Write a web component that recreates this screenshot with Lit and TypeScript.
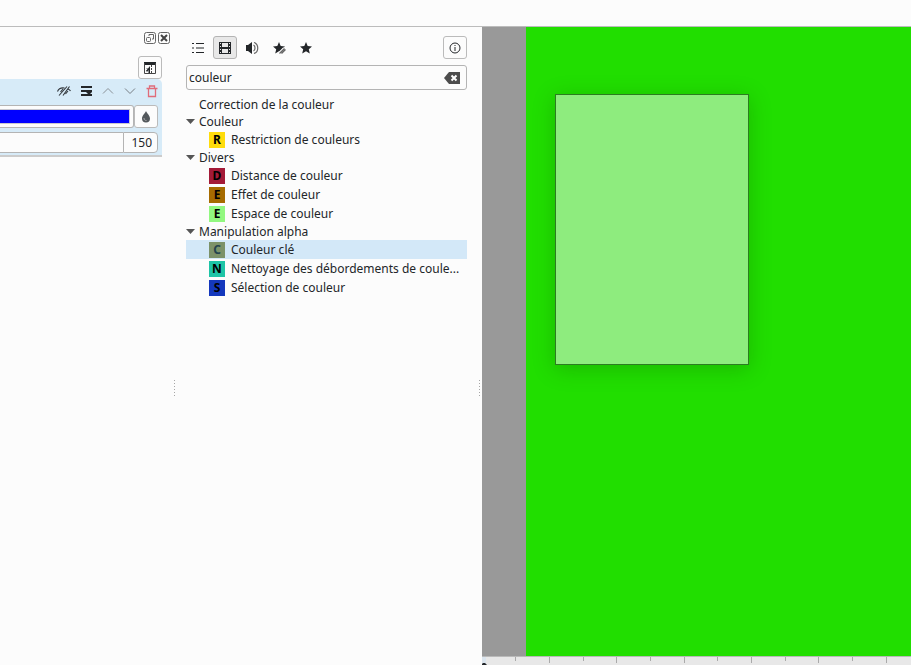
import { LitElement, html, css, svg } from "lit";
import { customElement, state } from "lit/decorators.js";
import { classMap } from "lit/directives/class-map.js";

interface Effect {
  letter: string;
  tone: string;
  label: string;
}
interface Group {
  name: string;
  effects: Effect[];
}

const GROUPS: Group[] = [
  { name: "Couleur", effects: [{ letter: "R", tone: "yellow", label: "Restriction de couleurs" }] },
  {
    name: "Divers",
    effects: [
      { letter: "D", tone: "crimson", label: "Distance de couleur" },
      { letter: "E", tone: "brown", label: "Effet de couleur" },
      { letter: "E", tone: "lime", label: "Espace de couleur" },
    ],
  },
  {
    name: "Manipulation alpha",
    effects: [
      { letter: "C", tone: "olive", label: "Couleur clé" },
      { letter: "N", tone: "teal", label: "Nettoyage des débordements de coule..." },
      { letter: "S", tone: "blue", label: "Sélection de couleur" },
    ],
  },
];

const TICKS = Array.from({ length: 60 }, (_, i) => ({ x: Math.round(33.15 + 33.7 * i), long: i % 2 === 1 }));

const icon = (body: unknown) =>
  html`<svg class="icon" width="16" height="16" viewBox="0 0 16 16" aria-hidden="true">${body}</svg>`;

const STAR = "M8 2l1.700 4 4.300.4-3.200 2.800 1 4.300L8 11.200 4.200 13.500l1-4.300L2 6.400 6.300 6z";

const ICONS = {
  float: svg`<g fill="none" stroke="#666"><rect x="2.500" y="2.500" width="11" height="11" rx="2"/><rect x="4.500" y="7.500" width="4" height="4" rx="1"/><path d="M7 6V4.500h4.500V9H10"/></g>`,
  close: svg`<rect x="2.500" y="2.500" width="11" height="11" rx="2" fill="none" stroke="#666"/><path d="M5 5l6 6M11 5l-6 6" stroke="#444" stroke-width="2"/>`,
  compare: svg`<path d="M2 2h12v3H2z" fill="#232629"/><path d="M2.500 3v10.500h11V3M9.500 5v2m0 1v2m0 1v2" fill="none" stroke="#444"/><path d="M8 6v7H6.500V10L5 12 4 10.500l1.500-1L4 8.500h2z" fill="#232629"/>`,
  hidden: svg`<g fill="none" stroke="#31363b" stroke-width="1.100"><path d="M1.500 8.500c1-2.500 3.500-4 7-3.500M12 6c1.500.5 2 1 2.500 2M3 12.500L11 3.500M7 12.500l6.500-9M4.500 9l2.500-3M9.500 11l2.500-3"/></g>`,
  menu: svg`<path d="M3 3h11v2H3zM3 7h11v2H3zM3 11h11v2H3z" fill="#232629"/><path d="M8 9h6l-3 3z" fill="#232629"/>`,
  up: svg`<path d="M3 10.500l5-5 5 5" fill="none" stroke="#8b9298"/>`,
  down: svg`<path d="M3 5.500l5 5 5-5" fill="none" stroke="#777e84"/>`,
  trash: svg`<g fill="none" stroke="#e06c7a" stroke-width="1.300"><path d="M2.500 5.500h11M5.500 5V3h5v2M4.500 6v7.500h7V6"/></g>`,
  drop: svg`<path d="M8 2c1 2.500 4 4.500 4 7.500a4 4 0 0 1-8 0C4 6.500 7 4.500 8 2z" fill="#53585c"/><path d="M6 9c0 2 1 2.500 2.500 2.500" fill="none" stroke="#aaa"/>`,
  list: svg`<path d="M2 3.500h2M2 8h2M2 12.500h2M6 3.500h8M6 8h8M6 12.500h8" stroke="#232629" stroke-width="1.200"/>`,
  film: svg`<path fill="#232629" fill-rule="evenodd" d="M2 2h12v12H2zM5 3v4h6V3zM5 9v4h6V9zM3 3v1h1V3zM3 6v1h1V6zM3 9v1h1V9zM3 12v1h1v-1zM12 3v1h1V3zM12 6v1h1V6zM12 9v1h1V9zM12 12v1h1v-1z"/>`,
  sound: svg`<path d="M2 5h2l4-3v12l-4-3H2z" fill="#232629"/><path d="M9.500 5c2 1 2 5 0 6M10 2.500c5 1.500 5 9.500 0 11" fill="none" stroke="#666" stroke-width="1.200"/>`,
  star: svg`<path d=${STAR} fill="#232629"/>`,
  starEdit: svg`<path d=${STAR} fill="#232629"/><path d="M7 14l6-6M10 14l4-4" stroke="#fcfcfc" stroke-width="2"/><path d="M8.500 13.500l5-5M10.500 13.500l4-4" stroke="#666" stroke-width="1.300"/>`,
  info: svg`<circle cx="8" cy="8" r="5" fill="none" stroke="#232629"/><path d="M7.500 5h1v1h-1zM7.500 7h1v4h-1z" fill="#232629"/>`,
  clear: svg`<path d="M0 8l5-6h11v12H5z" fill="#4d4d4d"/><path d="M7.500 5.500l5 5M12.500 5.500l-5 5" stroke="#fff" stroke-width="2"/>`,
};

@customElement("app-root")
export class AppRoot extends LitElement {
  @state() private selected = "Couleur clé";
  @state() private closed: string[] = [];

  static styles = css`
    :host {
      display: flex;
      flex-direction: column;
      height: 100vh;
      overflow: hidden;
      background: #fcfcfc;
      color: #232629;
      font: 12px/17px "Noto Sans", sans-serif;
    }
    * {
      box-sizing: border-box;
    }
    button,
    input {
      font: inherit;
      color: inherit;
      margin: 0;
      padding: 0;
    }
    button {
      border: 0;
      background: none;
    }
    .icon {
      display: block;
      flex: none;
    }
    header {
      flex: none;
      height: 27px;
      border-bottom: 1px solid #bcbcbc;
    }
    main {
      flex: 1;
      min-height: 0;
      display: flex;
    }
    .stack {
      flex: none;
      width: 171px;
      padding-top: 3px;
    }
    .dock {
      display: flex;
      justify-content: flex-end;
    }
    .dock button {
      width: 14px;
      display: flex;
      justify-content: center;
    }
    .tools {
      display: flex;
      justify-content: flex-end;
      margin: 10px 9px 0 0;
    }
    .tool {
      width: 24px;
      height: 23px;
      display: flex;
      align-items: center;
      justify-content: center;
      border: 1px solid transparent;
      border-radius: 3px;
    }
    .framed {
      border-color: #bbb;
    }
    .tool.on {
      background: #e8e8e8;
      border-color: #b4b4b4;
    }
    .effect {
      background: #d7ebf8;
      border-bottom: 2px solid #ccc;
      border-top-right-radius: 5px;
      margin-right: 9px;
      padding-bottom: 2px;
      display: flex;
      flex-direction: column;
      gap: 4px;
    }
    .actions {
      display: flex;
      align-items: center;
      justify-content: flex-end;
      gap: 6px;
      height: 22px;
      padding: 2px 2px 0 0;
    }
    .line {
      display: flex;
      padding-right: 4px;
    }
    .swatch {
      flex: 1;
      height: 23px;
      padding: 3px 3px 3px 0;
      border: 1px solid #b4b4b4;
      border-left: 0;
      border-radius: 0 3px 3px 0;
      background: #fcfcfc;
    }
    .fill {
      display: block;
      height: 15px;
      border: 1px solid #c8c8d0;
      border-left: 0;
      background: #00f;
    }
    .picker {
      background: #fcfcfc;
    }
    .slider {
      flex: 1;
      min-width: 0;
      height: 21px;
      border: 1px solid #b4b4b4;
      border-width: 1px 0;
      background: #fcfcfc;
    }
    .amount {
      width: 35px;
      height: 21px;
      padding-right: 5px;
      text-align: right;
      border: 1px solid #b4b4b4;
      border-radius: 0 4px 4px 0;
      background: #fcfcfc;
    }
    .grip {
      flex: none;
      width: 15px;
      display: flex;
      align-items: center;
      padding: 83px 0 0 3px;
    }
    .dots {
      width: 1px;
      height: 16px;
      background: repeating-linear-gradient(#a6a6a6 0 1px, transparent 1px 3px);
    }
    .grip.end {
      justify-content: flex-end;
      padding-right: 2px;
    }
    .browser {
      flex: none;
      width: 281px;
      padding-top: 9px;
    }
    .bar {
      display: flex;
      gap: 3px;
    }
    .info {
      margin-left: auto;
      background: #fcfcfc;
    }
    .search {
      display: flex;
      align-items: center;
      height: 25px;
      margin: 6px 0;
      padding: 0 6px 0 2px;
      border: 1px solid #b4b4b4;
      border-radius: 3px;
    }
    .search input {
      flex: 1;
      min-width: 0;
      border: 0;
      outline: 0;
      background: none;
    }
    .tree,
    .tree ul {
      list-style: none;
      margin: 0;
      padding: 0;
    }
    .row {
      width: 100%;
      height: 17px;
      display: flex;
      align-items: center;
      text-align: left;
      white-space: nowrap;
    }
    .arrow {
      width: 13px;
      flex: none;
    }
    .arrow svg {
      display: block;
    }
    .row.leaf {
      height: 19px;
      padding-left: 23px;
      gap: 6px;
    }
    .row.chosen {
      background: #d3e8f8;
    }
    .badge {
      flex: none;
      width: 16px;
      height: 16px;
      line-height: 16px;
      text-align: center;
      font-weight: 700;
      color: #000;
    }
    .yellow { background: #ffdc0c; }
    .crimson { background: #a31a37; }
    .brown { background: #a66b00; }
    .lime { background: #92f880; }
    .olive { background: #7c9269; color: #24444f; }
    .teal { background: #1dc4a6; }
    .blue { background: #1438bd; }
    .monitor {
      flex: 1;
      min-width: 0;
      display: flex;
      flex-direction: column;
    }
    .view {
      flex: 1;
      min-height: 0;
      padding-left: 44px;
      background: #999;
      display: flex;
    }
    .frame {
      flex: 1;
      padding: 67px 29px;
      background: #21de00;
    }
    .preview {
      width: 194px;
      height: 271px;
      background: #8eec7e;
      border: 1px solid #2c7d20;
      box-shadow: 0 4px 20px rgba(10, 70, 0, 0.25);
    }
    .ruler {
      flex: none;
      height: 9px;
      border-top: 1px solid #b9b9b9;
      background: #e8e8e8;
      overflow: hidden;
    }
    .ruler svg {
      display: block;
    }
  `;

  private toggle(name: string) {
    this.closed = this.closed.includes(name) ? this.closed.filter((n) => n !== name) : [...this.closed, name];
  }

  private tool(label: string, body: unknown, extra = "") {
    return html`<button class="tool ${extra}" aria-label=${label}>${icon(body)}</button>`;
  }

  private renderGroup(group: Group) {
    const open = !this.closed.includes(group.name);
    return html`<li>
      <button class="row" aria-expanded=${open ? "true" : "false"} @click=${() => this.toggle(group.name)}>
        <span class="arrow"><svg width="10" height="6" viewBox="0 0 10 6"><path d="M0 0h9L4.500 5z" fill="#555" /></svg></span>
        ${group.name}
      </button>
      ${open
        ? html`<ul>
            ${group.effects.map(
              (e) => html`<li>
                <button
                  class=${classMap({ row: true, leaf: true, chosen: this.selected === e.label })}
                  @click=${() => (this.selected = e.label)}
                >
                  <span class="badge ${e.tone}" aria-hidden="true">${e.letter}</span>${e.label}
                </button>
              </li>`
            )}
          </ul>`
        : ""}
    </li>`;
  }

  render() {
    return html`
      <header></header>
      <main>
        <section class="stack" aria-label="Effets appliqués">
          <div class="dock">
            <button aria-label="Détacher">${icon(ICONS.float)}</button>
            <button aria-label="Fermer">${icon(ICONS.close)}</button>
          </div>
          <div class="tools">${this.tool("Comparer", ICONS.compare, "framed")}</div>
          <div class="effect">
            <div class="actions">
              <button aria-label="Masquer">${icon(ICONS.hidden)}</button>
              <button aria-label="Menu">${icon(ICONS.menu)}</button>
              <button aria-label="Monter">${icon(ICONS.up)}</button>
              <button aria-label="Descendre">${icon(ICONS.down)}</button>
              <button aria-label="Supprimer">${icon(ICONS.trash)}</button>
            </div>
            <div class="line">
              <button class="swatch" aria-label="Couleur"><span class="fill"></span></button>
              ${this.tool("Pipette", ICONS.drop, "framed picker")}
            </div>
            <div class="line">
              <div class="slider"></div>
              <input class="amount" aria-label="Variance" .value=${"150"} />
            </div>
          </div>
        </section>
        <div class="grip"><div class="dots"></div></div>
        <section class="browser" aria-label="Effets">
          <div class="bar">
            ${this.tool("Tous", ICONS.list)} ${this.tool("Vidéo", ICONS.film, "on")}
            ${this.tool("Audio", ICONS.sound)} ${this.tool("Personnalisés", ICONS.starEdit)}
            ${this.tool("Favoris", ICONS.star)} ${this.tool("Informations", ICONS.info, "framed info")}
          </div>
          <div class="search">
            <input type="text" aria-label="Rechercher" .value=${"couleur"} />
            <button aria-label="Effacer">${icon(ICONS.clear)}</button>
          </div>
          <ul class="tree">
            <li><button class="row"><span class="arrow"></span>Correction de la couleur</button></li>
            ${GROUPS.map((g) => this.renderGroup(g))}
          </ul>
        </section>
        <div class="grip end"><div class="dots"></div></div>
        <section class="monitor" aria-label="Moniteur">
          <div class="view"><div class="frame"><div class="preview"></div></div></div>
          <div class="ruler">
            <svg width="100%" height="8">
              <rect width="4" height="8" fill="#dbe5ee" />
              ${TICKS.map((t) => svg`<rect x=${t.x} width="1" height=${t.long ? 6 : 4} fill="#aaa"/>`)}
              <path d="M0 8V7l1-1h2l2 2z" fill="#232629" />
            </svg>
          </div>
        </section>
      </main>
    `;
  }
}
